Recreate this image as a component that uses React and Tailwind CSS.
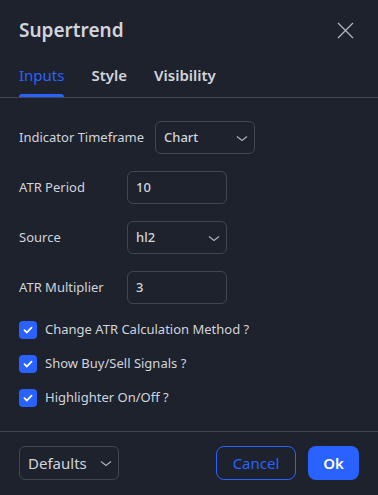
import React, { useState } from 'react';

const Chevron = () => (
  <svg width="18" height="18" viewBox="0 0 18 18" fill="none" className="text-[#b2b5be]">
    <path d="M4 7.5l5 4 5-4" stroke="currentColor" strokeWidth="1.1" />
  </svg>
);

const Check = () => (
  <svg width="12" height="12" viewBox="0 0 12 12" fill="none">
    <path d="M2.5 6.2l2.4 2.3 4.6-4.8" stroke="#ffffff" strokeWidth="1.8" strokeLinecap="round" strokeLinejoin="round" />
  </svg>
);

function Row({ label, labelW, children }) {
  return (
    <div className="flex items-center h-[33px]">
      <div className={labelW}>{label}</div>
      {children}
    </div>
  );
}

export default function App() {
  const [tab, setTab] = useState('Inputs');
  const checks = ['Change ATR Calculation Method ?', 'Show Buy/Sell Signals ?', 'Highlighter On/Off ?'];

  return (
    <div className="w-[378px] h-[495px] bg-[#1e222d] text-[#d1d4dc] text-[13px] flex flex-col" style={{ fontFamily: '"Noto Sans", "Open Sans", sans-serif' }}>
      {/* Header */}
      <div className="flex items-center justify-between pl-[19px] pr-[24px] h-[60px] pt-[1px]">
        <h1 className="text-[19px] font-semibold text-[#d1d4dc]">Supertrend</h1>
        <svg width="17" height="17" viewBox="0 0 17 17" fill="none">
          <path d="M1 1l15 15M16 1L1 16" stroke="#b2b5be" strokeWidth="1.3" />
        </svg>
      </div>

      {/* Tabs */}
      <div className="flex gap-[27px] px-[19px] border-b border-[#434651] h-[38px]">
        {['Inputs', 'Style', 'Visibility'].map(t => (
          <button key={t} onClick={() => setTab(t)} className={`relative text-[15px] pb-[7px] ${tab === t ? 'text-[#2962ff] font-normal' : 'text-[#d1d4dc] font-semibold'}`}>
            {t}
            {tab === t && <span className="absolute left-0 right-0 bottom-0 h-[3px] bg-[#2962ff] rounded-t-sm"></span>}
          </button>
        ))}
      </div>

      {/* Body */}
      <div className="flex-1 flex flex-col px-[19px] pt-[23px]">
        <div className="flex flex-col gap-[17px]">
          <Row label="Indicator Timeframe" labelW="w-[136px]">
            <div className="w-[100px] h-[33px] border border-[#434651] rounded-md flex items-center justify-between pl-[8px] pr-[3px] font-medium text-[#d1d4dc]">
              Chart <Chevron />
            </div>
          </Row>
          <Row label="ATR Period" labelW="w-[108px]">
            <div className="w-[100px] h-[33px] border border-[#434651] rounded-md flex items-center pl-[8px] font-medium">10</div>
          </Row>
          <Row label="Source" labelW="w-[108px]">
            <div className="w-[100px] h-[33px] border border-[#434651] rounded-md flex items-center justify-between pl-[8px] pr-[3px] font-medium">
              hl2 <Chevron />
            </div>
          </Row>
          <Row label="ATR Multiplier" labelW="w-[108px]">
            <div className="w-[100px] h-[33px] border border-[#434651] rounded-md flex items-center pl-[8px] font-medium">3</div>
          </Row>
        </div>

        <div className="flex flex-col gap-[16px] mt-[17px]">
          {checks.map(c => (
            <label key={c} className="flex items-center gap-[8px] h-[18px]">
              <span className="w-[18px] h-[18px] rounded-[4px] bg-[#2962ff] flex items-center justify-center">
                <Check />
              </span>
              <span>{c}</span>
            </label>
          ))}
        </div>
      </div>

      {/* Footer */}
      <div className="border-t border-[#434651] h-[64px] flex items-center justify-between px-[19px] pb-[1px]">
        <div className="w-[100px] h-[34px] border border-[#434651] rounded-md flex items-center justify-between pl-[8px] pr-[3px] text-[15px]">
          Defaults <Chevron />
        </div>
        <div className="flex gap-[12px]">
          <button className="w-[80px] h-[34px] border border-[#2962ff] rounded-lg text-[#2962ff] text-[15px]">Cancel</button>
          <button className="w-[51px] h-[34px] bg-[#2962ff] rounded-lg text-white text-[15px] font-semibold">Ok</button>
        </div>
      </div>
    </div>
  );
}
